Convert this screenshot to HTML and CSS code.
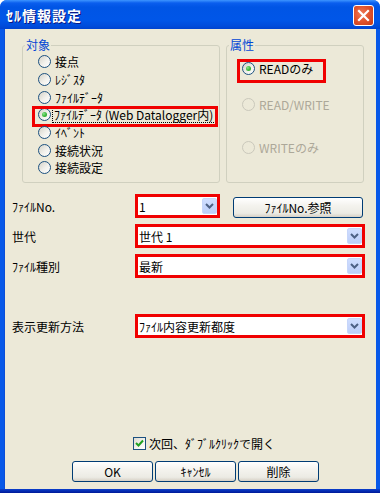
FILE: index.html
```html
<!DOCTYPE html>
<html lang="ja">
<head>
<meta charset="utf-8">
<link rel="stylesheet" href="styles.css">
</head>
<body>
<div class="window">
  <div class="titlebar">
    <span class="title">ｾﾙ情報設定</span>
    <span class="close"><svg width="13" height="13" viewBox="0 0 13 13"><path d="M2 2 L11 11 M11 2 L2 11" stroke="#fff" stroke-width="2.2" stroke-linecap="square"/></svg></span>
  </div>
  <div class="client">
    <div class="groups">
      <fieldset class="group group-target">
        <legend>対象</legend>
        <div class="list">
          <div class="row"><span class="rb"></span><span class="lbl">接点</span></div>
          <div class="row"><span class="rb"></span><span class="lbl">ﾚｼﾞｽﾀ</span></div>
          <div class="row"><span class="rb"></span><span class="lbl">ﾌｧｲﾙﾃﾞｰﾀ</span></div>
          <div class="row row-hl"><span class="rb on"></span><span class="lbl focus">ﾌｧｲﾙﾃﾞｰﾀ (Web Datalogger内)</span></div>
          <div class="row"><span class="rb"></span><span class="lbl">ｲﾍﾞﾝﾄ</span></div>
          <div class="row"><span class="rb"></span><span class="lbl">接続状況</span></div>
          <div class="row"><span class="rb"></span><span class="lbl">接続設定</span></div>
        </div>
      </fieldset>
      <fieldset class="group group-attr">
        <legend>属性</legend>
        <div class="list attr-list">
          <div class="arow arow-hl"><span class="rb on"></span><span class="lbl">READのみ</span></div>
          <div class="arow arow-2 disabled"><span class="rb"></span><span class="lbl">READ/WRITE</span></div>
          <div class="arow arow-3 disabled"><span class="rb"></span><span class="lbl">WRITEのみ</span></div>
        </div>
      </fieldset>
    </div>

    <div class="form">
      <div class="frow">
        <span class="flabel">ﾌｧｲﾙNo.</span>
        <div class="combo combo-short"><span class="ctext">1</span><span class="cbtn"><svg width="9" height="6" viewBox="0 0 9 6"><path d="M1 1 L4.5 4.5 L8 1" fill="none" stroke="#4D6185" stroke-width="2"/></svg></span></div>
        <button class="btn btn-ref">ﾌｧｲﾙNo.参照</button>
      </div>
      <div class="frow">
        <span class="flabel">世代</span>
        <div class="combo combo-long"><span class="ctext">世代 1</span><span class="cbtn"><svg width="9" height="6" viewBox="0 0 9 6"><path d="M1 1 L4.5 4.5 L8 1" fill="none" stroke="#4D6185" stroke-width="2"/></svg></span></div>
      </div>
      <div class="frow">
        <span class="flabel">ﾌｧｲﾙ種別</span>
        <div class="combo combo-long"><span class="ctext">最新</span><span class="cbtn"><svg width="9" height="6" viewBox="0 0 9 6"><path d="M1 1 L4.5 4.5 L8 1" fill="none" stroke="#4D6185" stroke-width="2"/></svg></span></div>
      </div>
      <div class="frow"></div>
      <div class="frow">
        <span class="flabel">表示更新方法</span>
        <div class="combo combo-long"><span class="ctext">ﾌｧｲﾙ内容更新都度</span><span class="cbtn"><svg width="9" height="6" viewBox="0 0 9 6"><path d="M1 1 L4.5 4.5 L8 1" fill="none" stroke="#4D6185" stroke-width="2"/></svg></span></div>
      </div>
    </div>

    <div class="check-row">
      <span class="cb"><svg width="11" height="11" viewBox="0 0 11 11"><path d="M2 5 L4.5 7.5 L9 2.5" stroke="#21A121" stroke-width="2" fill="none"/></svg></span>
      <span class="lbl">次回、ﾀﾞﾌﾞﾙｸﾘｯｸで開く</span>
    </div>

    <div class="buttons">
      <button class="btn btn-dlg">OK</button>
      <button class="btn btn-dlg">ｷｬﾝｾﾙ</button>
      <button class="btn btn-dlg">削除</button>
    </div>
  </div>
</div>
</body>
</html>
```

FILE: styles.css
```css
* { box-sizing: border-box; }
html, body { margin: 0; padding: 0; background: #ffffff; }
body {
  font-family: "Noto Sans CJK JP", "Noto Sans", sans-serif;
  font-size: 12px;
  color: #000;
}
.window {
  width: 380px;
  height: 493px;
  display: flex;
  flex-direction: column;
  border-radius: 7px 7px 0 0;
  overflow: hidden;
  background: linear-gradient(to bottom, #0758E8 0, #0758E8 489px, #0A3FCC 489px, #001A98 493px);
}
.titlebar {
  height: 29px;
  flex: none;
  display: flex;
  justify-content: space-between;
  align-items: flex-start;
  padding: 5px 6px 0 6px;
  background: linear-gradient(to bottom, #3D95FF 0, #0A5EEE 3px, #0055E5 7px, #0056E8 20px, #004CDB 26px, #0043CF 29px);
}
.title {
  color: #fff;
  font-weight: bold;
  font-size: 14px;
  letter-spacing: 1px;
  line-height: 21px;
  text-shadow: 1px 1px #0A1883;
}
.close {
  width: 21px;
  height: 21px;
  border: 1px solid #fff;
  border-radius: 3px;
  display: flex;
  align-items: center;
  justify-content: center;
  background: radial-gradient(circle at 40% 40%, #EE7A58 0, #E0522C 50%, #C53A16 100%);
}
.client {
  flex: 1;
  margin: 0 4px 4px 4px;
  background: #ECE9D8;
  display: flex;
  flex-direction: column;
  border-left: 1px solid #0A4ED8;
}
.groups {
  display: flex;
  gap: 6px;
  margin-top: 9px;
  padding-left: 17px;
}
.group {
  margin: 0;
  padding: 0;
  min-width: 0;
  height: 145px;
  border: 1px solid #D0D0BF;
  border-radius: 3px;
}
.group legend {
  color: #0046D5;
  font-size: 12px;
  line-height: 14px;
  padding: 0 1px;
  margin-left: 2px;
}
.group-target { width: 198px; }
.group-attr { width: 138px; }

.list { display: flex; flex-direction: column; padding-top: 1px; }
.row {
  position: relative;
  height: 17.67px;
  display: flex;
  align-items: center;
  padding-left: 15px;
  gap: 4px;
}
.row-hl::after {
  content: "";
  position: absolute;
  left: 9px;
  right: 1px;
  top: 0;
  bottom: -3px;
  border: 3px solid #F00000;
}
.lbl { line-height: 15px; white-space: nowrap; }
.focus { outline: 1px dotted #000; outline-offset: 0; padding: 0 2px 0 1px; margin-left: -2px; }

.attr-list { padding-top: 7px; }
.arow {
  position: relative;
  height: 18px;
  display: flex;
  align-items: center;
  padding-left: 15px;
  gap: 4px;
}
.arow-2 { margin-top: 18px; }
.arow-3 { margin-top: 25px; }
.arow-hl::after {
  content: "";
  position: absolute;
  left: 10px;
  width: 83px;
  top: 0;
  height: 18px;
  border: 3px solid #F00000;
}
.disabled .lbl { color: #ACA899; }

.rb {
  position: relative;
  flex: none;
  width: 13px;
  height: 13px;
  border-radius: 50%;
  border: 1px solid #1C5180;
  background: linear-gradient(135deg, #D4D2C8 0, #F2F1EC 55%, #ffffff 100%);
}
.rb.on::after {
  content: "";
  position: absolute;
  left: 3px;
  top: 3px;
  width: 5px;
  height: 5px;
  border-radius: 50%;
  background: radial-gradient(circle at 35% 35%, #8CE28C 0, #3FBB3F 50%, #1E9A1E 100%);
}
.disabled .rb { border-color: #CAC8BB; background: #ECE9D8; }

.form {
  margin-top: 11px;
  padding-left: 7px;
  display: flex;
  flex-direction: column;
  gap: 6px;
}
.frow {
  height: 24px;
  display: flex;
  align-items: center;
}
.flabel { width: 123px; flex: none; line-height: 15px; }
.combo {
  height: 24px;
  border: 3px solid #F00000;
  background: #fff;
  display: flex;
  align-items: center;
  justify-content: space-between;
  padding: 1px 0 1px 1px;
}
.combo-short { width: 85px; }
.combo-long { width: 230px; }
.ctext { line-height: 15px; font-size: 12px; }
.cbtn {
  width: 15px;
  height: 16px;
  border-radius: 2px;
  background: linear-gradient(to bottom, #D0DEFF 0, #BCCEF8 100%);
  border: 1px solid #C7D6FA;
  display: flex;
  align-items: center;
  justify-content: center;
}
.btn {
  font-family: inherit;
  font-size: 12px;
  color: #000;
  height: 21px;
  padding: 0;
  border: 1px solid #003C74;
  border-radius: 3px;
  background: linear-gradient(to bottom, #FFFFFF 0, #F4F3EE 40%, #ECEBE4 80%, #D6D0C5 100%);
  line-height: 15px;
}
.btn-ref { width: 130px; margin-left: 13px; align-self: flex-end; }

.check-row {
  margin-top: auto;
  margin-left: 128px;
  height: 14px;
  display: flex;
  align-items: center;
  gap: 3px;
}
.cb {
  width: 13px;
  height: 13px;
  border: 1px solid #1C5180;
  background: linear-gradient(135deg, #DCDAD0 0, #F4F3EE 55%, #fff 100%);
  display: flex;
  align-items: center;
  justify-content: center;
}
.buttons {
  display: flex;
  gap: 2px;
  margin: 11px 0 7px 67px;
}
.btn-dlg { width: 81px; }
```
